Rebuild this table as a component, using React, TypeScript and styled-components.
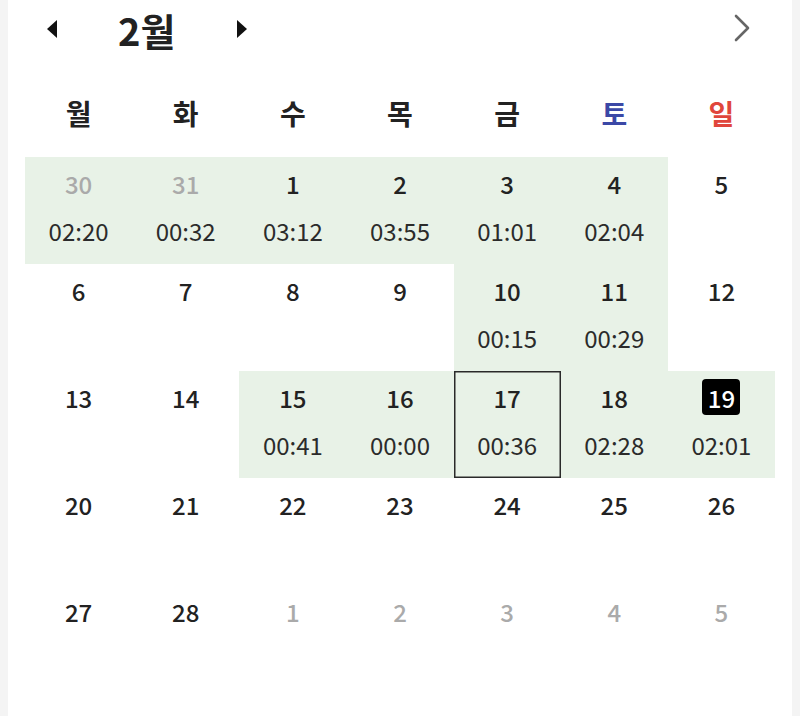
import React from "react";
import styled, { createGlobalStyle } from "styled-components";

const Global = createGlobalStyle`
  html, body { margin: 0; padding: 0; }
  body {
    background: #f4f4f4;
    padding: 0 8px;
    font-family: "Noto Sans CJK KR", "Noto Sans", sans-serif;
    color: #222;
  }
`;

const Card = styled.div`
  background: #fff;
  padding: 0 17px;
  min-height: 716px;
  box-sizing: border-box;
`;

const Header = styled.div`
  height: 60px;
  display: flex;
  align-items: center;
`;

const NavGroup = styled.div`
  display: flex;
  align-items: center;
  margin-left: 22px;
`;

const Tri = styled.span<{ $dir: "left" | "right" }>`
  width: 0;
  height: 0;
  margin-bottom: 2px;
  border-top: 9px solid transparent;
  border-bottom: 9px solid transparent;
  ${(p) =>
    p.$dir === "left"
      ? "border-right: 10px solid #111;"
      : "border-left: 10px solid #111;"}
`;

const MonthTitle = styled.h1`
  margin: 0 0 0 61px;
  width: 119px;
  text-align: left;
  font-size: 38px;
  font-weight: 700;
  line-height: 60px;
  color: #222;
`;

const Chevron = styled.div`
  margin-left: auto;
  margin-right: 24px;
  display: flex;
  align-items: center;
  padding-bottom: 5px;
`;

const WeekRow = styled.div`
  display: grid;
  grid-template-columns: repeat(7, 1fr);
  height: 40px;
  margin: 33px 0 24px;
`;

const WeekLabel = styled.div<{ $color: string }>`
  display: flex;
  align-items: center;
  justify-content: center;
  font-size: 28px;
  font-weight: 700;
  color: ${(p) => p.$color};
`;

const Grid = styled.div`
  display: grid;
  grid-template-columns: repeat(7, 1fr);
  grid-auto-rows: 107px;
`;

const Cell = styled.div<{ $green: boolean; $selected: boolean }>`
  box-sizing: border-box;
  display: flex;
  flex-direction: column;
  align-items: center;
  padding-top: 11px;
  background: ${(p) => (p.$green ? "#e8f2e7" : "#fff")};
  box-shadow: ${(p) => (p.$selected ? "inset 0 0 0 1.5px #2a2a2a" : "none")};
`;

const DayNum = styled.div<{ $muted: boolean; $today: boolean }>`
  height: 30px;
  min-width: 38px;
  padding: 0 4px;
  box-sizing: border-box;
  display: flex;
  align-items: center;
  justify-content: center;
  font-size: 24px;
  font-weight: 500;
  color: ${(p) => (p.$today ? "#fff" : p.$muted ? "#aaa" : "#222")};
  ${(p) =>
    p.$today
      ? "background: #000; border-radius: 4px; height: 36px; margin-top: -3px; margin-bottom: -3px;"
      : ""}
`;

const Time = styled.div`
  margin-top: 18px;
  height: 30px;
  line-height: 30px;
  font-size: 24px;
  font-weight: 400;
  color: #2b2b2b;
`;

type Day = {
  d: number;
  muted?: boolean;
  time?: string;
  green?: boolean;
  selected?: boolean;
  today?: boolean;
};

const days: Day[] = [
  { d: 30, muted: true, time: "02:20", green: true },
  { d: 31, muted: true, time: "00:32", green: true },
  { d: 1, time: "03:12", green: true },
  { d: 2, time: "03:55", green: true },
  { d: 3, time: "01:01", green: true },
  { d: 4, time: "02:04", green: true },
  { d: 5 },
  { d: 6 },
  { d: 7 },
  { d: 8 },
  { d: 9 },
  { d: 10, time: "00:15", green: true },
  { d: 11, time: "00:29", green: true },
  { d: 12 },
  { d: 13 },
  { d: 14 },
  { d: 15, time: "00:41", green: true },
  { d: 16, time: "00:00", green: true },
  { d: 17, time: "00:36", green: true, selected: true },
  { d: 18, time: "02:28", green: true },
  { d: 19, time: "02:01", green: true, today: true },
  { d: 20 },
  { d: 21 },
  { d: 22 },
  { d: 23 },
  { d: 24 },
  { d: 25 },
  { d: 26 },
  { d: 27 },
  { d: 28 },
  { d: 1, muted: true },
  { d: 2, muted: true },
  { d: 3, muted: true },
  { d: 4, muted: true },
  { d: 5, muted: true },
];

const weekdays: { label: string; color: string }[] = [
  { label: "월", color: "#222" },
  { label: "화", color: "#222" },
  { label: "수", color: "#222" },
  { label: "목", color: "#222" },
  { label: "금", color: "#222" },
  { label: "토", color: "#3b48a6" },
  { label: "일", color: "#e0463c" },
];

export default function App() {
  return (
    <>
      <Global />
      <Card>
        <Header>
          <NavGroup>
            <Tri $dir="left" />
            <MonthTitle>2월</MonthTitle>
            <Tri $dir="right" />
          </NavGroup>
          <Chevron>
            <svg width="18" height="28" viewBox="0 0 18 28">
              <path
                d="M3 2 L15 14 L3 26"
                fill="none"
                stroke="#666"
                strokeWidth="2.6"
                strokeLinecap="round"
                strokeLinejoin="round"
              />
            </svg>
          </Chevron>
        </Header>
        <WeekRow>
          {weekdays.map((w) => (
            <WeekLabel key={w.label} $color={w.color}>
              {w.label}
            </WeekLabel>
          ))}
        </WeekRow>
        <Grid>
          {days.map((day, i) => (
            <Cell key={i} $green={!!day.green} $selected={!!day.selected}>
              <DayNum $muted={!!day.muted} $today={!!day.today}>
                {day.d}
              </DayNum>
              {day.time && <Time>{day.time}</Time>}
            </Cell>
          ))}
        </Grid>
      </Card>
    </>
  );
}
